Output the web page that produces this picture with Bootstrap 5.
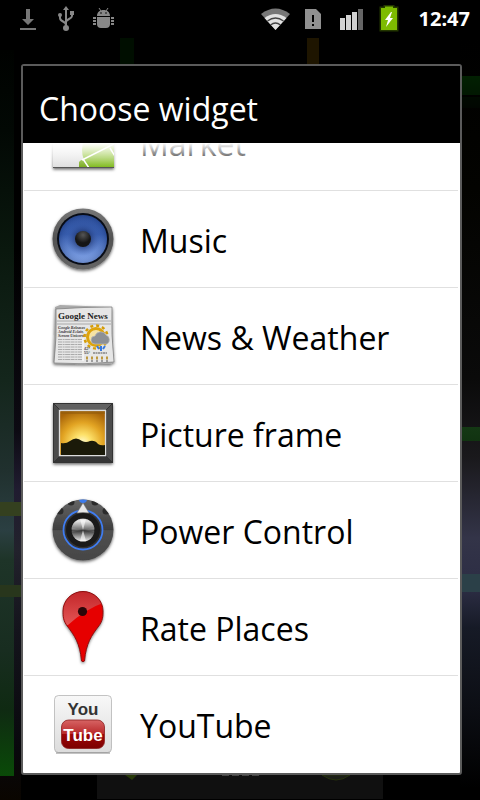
<!DOCTYPE html>
<html lang="en">
<head>
<meta charset="utf-8">
<meta name="viewport" content="width=device-width, initial-scale=1">
<title>Choose widget</title>
<link rel="stylesheet" href="https://cdn.jsdelivr.net/npm/bootstrap@5.3.0/dist/css/bootstrap.min.css">
<style>
body{font-family:"Open Sans","Noto Sans",sans-serif;background:#000}
.wallpaper{min-height:100vh;background:
 linear-gradient(#1e1500,#1e1500) 307px 38px/12px 30px no-repeat,
 linear-gradient(#000e00,#000e00) 120px 38px/14px 30px no-repeat,
 linear-gradient(#34401f,#34401f) 0 502px/21px 14px no-repeat,
 linear-gradient(#28361c,#28361c) 0 585px/21px 12px no-repeat,
 linear-gradient(#022002,#021802) 100% 76px/20px 19px no-repeat,
 linear-gradient(#010a01,#010601) 100% 97px/20px 11px no-repeat,
 linear-gradient(#143814,#113311) 100% 427px/20px 14px no-repeat,
 linear-gradient(#2b4048,#2b4048) 100% 574px/20px 18px no-repeat,
 linear-gradient(#000200,#020804 80px,#0a180e 200px,#14261c 330px,#20302e 420px,#2b3f42 480px,#1e3428 510px,#182d20 600px,#0f2a12 660px,#0a4a08 725px,#094607) 0 50px/14px 726px no-repeat,
 linear-gradient(#000,#000 200px,#0c0a12 380px,#201c30 440px,#22222c 500px,#14141c 580px,#08080c 700px,#0a0500) 0 50px/21px 750px no-repeat,
 linear-gradient(#000,#030300 150px,#0a0a0a 340px,#1a191c 420px,#333448 500px,#2c2d44 550px,#161a26 590px,#0c0e14 670px,#000 750px) 100% 38px/20px 762px no-repeat,
 #000}
.status{height:38px;padding:0 10px 0 16px;background:#000}
.clock{width:58px;font:700 20px/38px "Noto Sans",sans-serif}
.start-icons{gap:14px}
.end-icons{gap:6px}
.picker{flex:1 1 auto;margin:26px 18px 0 21px;border:2px solid #5b5b5b;border-radius:3px;background:#fff}
.picker-title{font-size:32px;line-height:45px;padding:20px 16px 12px;background:#000;font-weight:400}
.rows{overflow:hidden;height:630px}
.rows::before{content:"";position:absolute;z-index:2;inset:0 0 auto;height:24px;background:linear-gradient(#fff,#fff0)}
.entry{height:97px;flex:none;font-size:32px;line-height:45px;color:#000;padding:0 2px 0 17px;gap:10px;background:linear-gradient(#e0e0e0,#e0e0e0) 1px 100%/calc(100% - 3px) 1px no-repeat}
.entry:last-child{background:none}
.entry svg{flex:none;margin-bottom:1px}
.entry span{padding-top:2px}
.dock{height:25px;margin:0 97px}
</style>
</head>
<body>
<div class="wallpaper d-flex flex-column">
<header class="status d-flex justify-content-between">
 <div class="start-icons d-flex">
  <svg width="24" height="38" viewBox="16 0 24 38" fill="#777" aria-label="Download"><path d="M26 9h4v10h4l-6 6-6-6h4zM20 28h16v2H20z"/></svg>
  <svg width="24" height="38" viewBox="54 0 24 38" fill="#888" aria-label="USB"><path d="M66 10v18M66 25c0-4-6-3-6-7v-3M66 22c0-3 6-3 6-6v-3" fill="none" stroke="#888" stroke-width="2"/><path d="M66 6l3 4h-6zM70 11h4v4h-4z"/><circle cx="60" cy="15" r="2"/><circle cx="66" cy="28" r="3"/></svg>
  <svg width="24" height="38" viewBox="92 0 24 38" fill="#888" aria-label="Debugging"><path d="M97 16c0-4 3-6 6.500-6s6.500 2 6.500 6zM97 17h13v7q0 4-4 4h-5q-4 0-4-4zM93 17h3v2h-3zM93 20h3v2h-3zM93 23h3v2h-3zM111 17h3v2h-3zM111 20h3v2h-3zM111 23h3v2h-3z"/><path d="M101 11l-2-3M106 11l2-3" stroke="#888"/><circle cx="101" cy="13" r=".8" fill="#000"/><circle cx="106" cy="13" r=".8" fill="#000"/></svg>
 </div>
 <div class="end-icons d-flex text-white">
  <svg width="32" height="38" viewBox="260 0 32 38" aria-label="Wi-Fi"><path d="M261 14q14.500-11 29 0l-14.500 16z" fill="#777"/><path d="M264.500 18q11-8 22 0l-11 12z" fill="#e2e2e2"/><path d="M267.500 21q8-6 16 0M270.500 25q5-4 10 0" fill="none" stroke="#444" stroke-width="1.300"/></svg>
  <svg width="32" height="38" viewBox="298 0 32 38" aria-label="No SIM"><path d="M305 9h11l5 5v15h-16z" fill="#909090"/><path d="M312 15h2v7h-2zM312 24h2v2h-2z"/></svg>
  <svg width="32" height="38" viewBox="336 0 32 38" fill="#d2d2d2" aria-label="Signal"><path d="M340 18h5v12h-5zM346 15h5v15h-5zM352 12h5v18h-5z"/><path d="M358 9h5v21h-5z" fill="#666"/></svg>
  <svg width="32" height="38" viewBox="374 0 32 38" aria-label="Charging"><path d="M381 8h4V6.500h8V8h4v22h-16z" fill="#7dbb00" stroke="#3b5a00" stroke-opacity=".6" stroke-width="3" paint-order="stroke"/><path d="M391 12l-6 8h3l-2 7 7-9h-3l2-6z" fill="#fff"/></svg>
  <time class="clock text-end">12:47</time>
 </div>
</header>

<main class="picker d-flex flex-column">
 <h1 class="picker-title text-white m-0">Choose widget</h1>
 <div class="rows position-relative d-flex flex-column justify-content-end">
  <button class="entry btn border-0 rounded-0 d-flex align-items-center text-start">
   <svg width="90" height="90" viewBox="0 -1 90 90"><defs><linearGradient id="silver" x2="0" y2="1"><stop stop-color="#fff"/><stop offset="1" stop-color="#dedede"/></linearGradient><linearGradient id="lime" x2="0" y2="1"><stop stop-color="#c5df7d"/><stop offset="1" stop-color="#76b512"/></linearGradient><filter id="soft" x="-20%" y="-20%" width="140%" height="150%"><feDropShadow dx="0" dy="1.500" stdDeviation="1.600" flood-opacity=".6"/></filter><clipPath id="bag"><path d="M13 20h61v50H13z"/></clipPath></defs><g filter="url(#soft)"><path d="M13 20h61v50H13z" fill="url(#silver)"/><g clip-path="url(#bag)"><circle cx="66" cy="52" r="24" fill="url(#lime)"/><path d="M39 64q3-4 6 0l5 8H39z" fill="#7cae20"/><path d="M42 62l32-16M43 61l8 12M70 50l6 10" stroke="#fff" stroke-width="1.500"/></g><path d="M13 69.500h61" stroke="#555"/></g></svg><span>Market</span></button>
  <button class="entry btn border-0 rounded-0 d-flex align-items-center text-start">
   <svg width="90" height="90" viewBox="0 -1 90 90"><defs><linearGradient id="rim" x2="0" y2="1"><stop stop-color="#777"/><stop offset=".5" stop-color="#525252"/><stop offset="1" stop-color="#666"/></linearGradient><linearGradient id="cone" x2="0" y2="1"><stop stop-color="#2d4f9a"/><stop offset=".4" stop-color="#3358a8"/><stop offset="1" stop-color="#8fb0f0"/></linearGradient><radialGradient id="coneShade"><stop offset=".25" stop-color="#102050" stop-opacity=".6"/><stop offset=".7" stop-color="#5078d0" stop-opacity=".1"/><stop offset="1" stop-color="#102a68" stop-opacity=".3"/></radialGradient><radialGradient id="knob" cy=".25"><stop stop-color="#555"/><stop offset="1" stop-color="#151515"/></radialGradient></defs><g filter="url(#soft)"><circle cx="43" cy="44" r="30.500" fill="url(#rim)"/></g><circle cx="43" cy="44" r="26" fill="#080c16"/><circle cx="43" cy="44" r="24" fill="url(#cone)"/><circle cx="43" cy="44" r="24" fill="url(#coneShade)"/><circle cx="43" cy="44" r="8" fill="url(#knob)"/></svg><span>Music</span></button>
  <button class="entry btn border-0 rounded-0 d-flex align-items-center text-start">
   <svg width="90" height="90" viewBox="0 -1 90 90"><g filter="url(#soft)"><path d="M15 15l5-2 52 2 1 50-2 7-58-2z" fill="#aaa"/><path d="M16 17q28-2 56-2-1 28 2 55-30 3-60 1 3-26 2-54z" fill="#e6e6e6" stroke="#777" stroke-width=".7"/></g><text x="18" y="27" font-family="Liberation Serif,serif" font-weight="700" font-size="9" fill="#222">Google News</text><path d="M17 29h54M17 32h54" stroke="#999" stroke-width=".8"/><g font-family="Liberation Serif,serif" font-style="italic" font-weight="700" font-size="4" fill="#333"><text x="18" y="37">Google Releases</text><text x="18" y="41">Android Eclair,</text><text x="18" y="45">Screen Unicorns!</text></g><path d="M18 47.500h24M18 50h24M18 52.500h24M18 55h24M18 57.500h24M18 60h24M18 62.500h24M18 65h24M18 67.500h24" stroke="#aaa" stroke-dasharray="4 .6 2 .5 5 .5"/><path d="M43 46v23" stroke="#fff"/><circle cx="56" cy="45" r="11.500" fill="none" stroke="#d59c08" stroke-width="2.500" stroke-dasharray="3 3"/><circle cx="56" cy="45" r="8.500" fill="#f6e3a4" stroke="#dea40c" stroke-width="3"/><path d="M55 52a4 4 0 010-8 6 6 0 0111-1 5 5 0 011 9z" fill="#8d9095" stroke="#bbb" stroke-width=".7"/><path d="M57 54l2 3M61 54v5M65 54l-2 3" stroke="#3879de" stroke-width="2"/><text x="44" y="58" font-family="Liberation Sans,sans-serif" font-size="4">42°</text><text x="44" y="62" font-family="Liberation Sans,sans-serif" font-size="4">55°</text><path d="M53 61h14" stroke="#555" stroke-dasharray="2 .5"/><path d="M46 66h22" stroke="#bd9840" stroke-width="3" stroke-dasharray="2 3"/><path d="M46 69h22" stroke="#555" stroke-width="1" stroke-dasharray="2 3"/></svg><span>News &amp; Weather</span></button>
  <button class="entry btn border-0 rounded-0 d-flex align-items-center text-start">
   <svg width="90" height="90" viewBox="0 -1 90 90"><defs><radialGradient id="dusk" cx=".5" cy=".72" r=".75"><stop stop-color="#fffbd0"/><stop offset=".25" stop-color="#fde16a"/><stop offset=".6" stop-color="#e2a423"/><stop offset="1" stop-color="#a86408"/></radialGradient></defs><g filter="url(#soft)"><rect x="13" y="14" width="60" height="60" rx="1" fill="#4b4b4b"/></g><path d="M13 14h60l-7 7H20z" fill="#616161"/><path d="M13 74h60l-7-7H20z" fill="#353535"/><path d="M13.500 14.500h59v59h-59zM13 14l7 7M73 14l-7 7M13 74l7-7M73 74l-7-7" fill="none" stroke="#333"/><path d="M19.500 21.500h46v45h-46z" fill="url(#dusk)" stroke="#ddd" stroke-width="1.300"/><path d="M21 66V54q5 1 9-2 6-5 12 0 4 2 8 0 5-1 8 3 3 2 7 1v10z" fill="#1b1a09"/><path d="M21 22h44v3H21z" fill="#8c5a0c" opacity=".5"/></svg><span>Picture frame</span></button>
  <button class="entry btn border-0 rounded-0 d-flex align-items-center text-start">
   <svg width="90" height="90" viewBox="0 -1 90 90"><defs><linearGradient id="dial" x2="0" y2="1"><stop stop-color="#666"/><stop offset=".5" stop-color="#3d3d3d"/><stop offset=".51" stop-color="#505050"/><stop offset="1" stop-color="#454545"/></linearGradient><linearGradient id="metal" x2="0" y2="1"><stop stop-color="#aaa"/><stop offset=".1" stop-color="#e8e8e8"/><stop offset=".45" stop-color="#777"/><stop offset=".52" stop-color="#333"/><stop offset="1" stop-color="#eee"/></linearGradient><clipPath id="dialEdge"><circle cx="43" cy="44" r="30.500"/></clipPath></defs><g filter="url(#soft)"><circle cx="43" cy="44" r="30.500" fill="url(#dial)"/></g><g clip-path="url(#dialEdge)" fill="#2b2b2b"><circle cx="20" cy="25" r="3.500"/><circle cx="31" cy="16" r="3.500"/><circle cx="55" cy="16" r="3.500"/><circle cx="66" cy="25" r="3.500"/><circle cx="43" cy="13" r="4" fill="#3d7bea"/></g><circle cx="43" cy="44" r="19.500" fill="#333" stroke="#3f7cf0" stroke-width="1.800"/><circle cx="43" cy="44" r="17" fill="#1a1a1a"/><path d="M37 27l6-10 6 10q-6-1-12 0z" fill="#e8e8e8" stroke="#777" stroke-width=".5"/><circle cx="43" cy="44" r="11.500" fill="url(#metal)"/><path d="M43 44l-11-2v4zM43 44l11-2v4z" fill="#fff" opacity=".15"/><path d="M43 44l-3-11h6zM43 44l-3 11h6z" fill="#fff" opacity=".6"/></svg><span>Power Control</span></button>
  <button class="entry btn border-0 rounded-0 d-flex align-items-center text-start">
   <svg width="90" height="90" viewBox="0 -1 90 90"><defs><linearGradient id="gloss" x2="0" y2="1"><stop stop-color="#b52a2e"/><stop offset="1" stop-color="#e46a6a"/></linearGradient><clipPath id="pinHead"><path d="M41.500 78C40 60 34 52 28 44 23 38 23 33 23 28a20 19.500 0 0140 0c0 5 0 10-5 16-6 8-12 16-13.500 34q-1.500 1.500-3 0z"/></clipPath></defs><path d="M41.500 78C40 60 34 52 28 44 23 38 23 33 23 28a20 19.500 0 0140 0c0 5 0 10-5 16-6 8-12 16-13.500 34q-1.500 1.500-3 0z" fill="#e60505" filter="url(#soft)"/><path clip-path="url(#pinHead)" d="M20 5h46v14q-18 5-38 23H20z" fill="url(#gloss)" opacity=".8"/><path d="M41.500 78C40 60 34 52 28 44 23 38 23 33 23 28a20 19.500 0 0140 0c0 5 0 10-5 16-6 8-12 16-13.500 34q-1.500 1.500-3 0z" fill="none" stroke="#8c1010"/><circle cx="42.500" cy="28.500" r="4.600" fill="#2b0608"/></svg><span>Rate Places</span></button>
  <button class="entry btn border-0 rounded-0 d-flex align-items-center text-start">
   <svg width="90" height="90" viewBox="0 -1 90 90"><defs><linearGradient id="plate" x2="0" y2="1"><stop stop-color="#f8f8f8"/><stop offset="1" stop-color="#dcdcdc"/></linearGradient><linearGradient id="tv" x2="0" y2="1"><stop stop-color="#d76464"/><stop offset=".48" stop-color="#b92a2c"/><stop offset=".5" stop-color="#9d0507"/><stop offset="1" stop-color="#7c0000"/></linearGradient></defs><rect x="14.500" y="15.500" width="57" height="57" rx="4" fill="url(#plate)" stroke="#aaa" stroke-width=".7"/><path d="M16 73h54" stroke="#888"/><rect x="21.500" y="40" width="43" height="28.500" rx="7" fill="url(#tv)" stroke="#8c2020" stroke-width=".8"/><g font-family="Liberation Sans,sans-serif" font-weight="700" text-anchor="middle"><text x="43" y="35" font-size="17" fill="#333">You</text><text x="43" y="61" font-size="17" fill="#fff">Tube</text></g></svg><span>YouTube</span></button>
 </div>
</main>
<footer class="dock"><svg class="d-block w-100" height="25" viewBox="0 0 286 25" preserveAspectRatio="none" aria-hidden="true"><path d="M0 0h286v24H0z" fill="#101010"/><path d="M28 0h12l-5 5z" fill="#263808"/><path d="M125 0h7M135 0h7M145 0h7M155 0h7" stroke="#444" stroke-width="2"/><path d="M225 0q14 10 28 0z" fill="#1c1f18" stroke="#26320c"/></svg></footer>
</div>
<script src="https://cdn.jsdelivr.net/npm/bootstrap@5.3.0/dist/js/bootstrap.bundle.min.js"></script>
</body>
</html>
